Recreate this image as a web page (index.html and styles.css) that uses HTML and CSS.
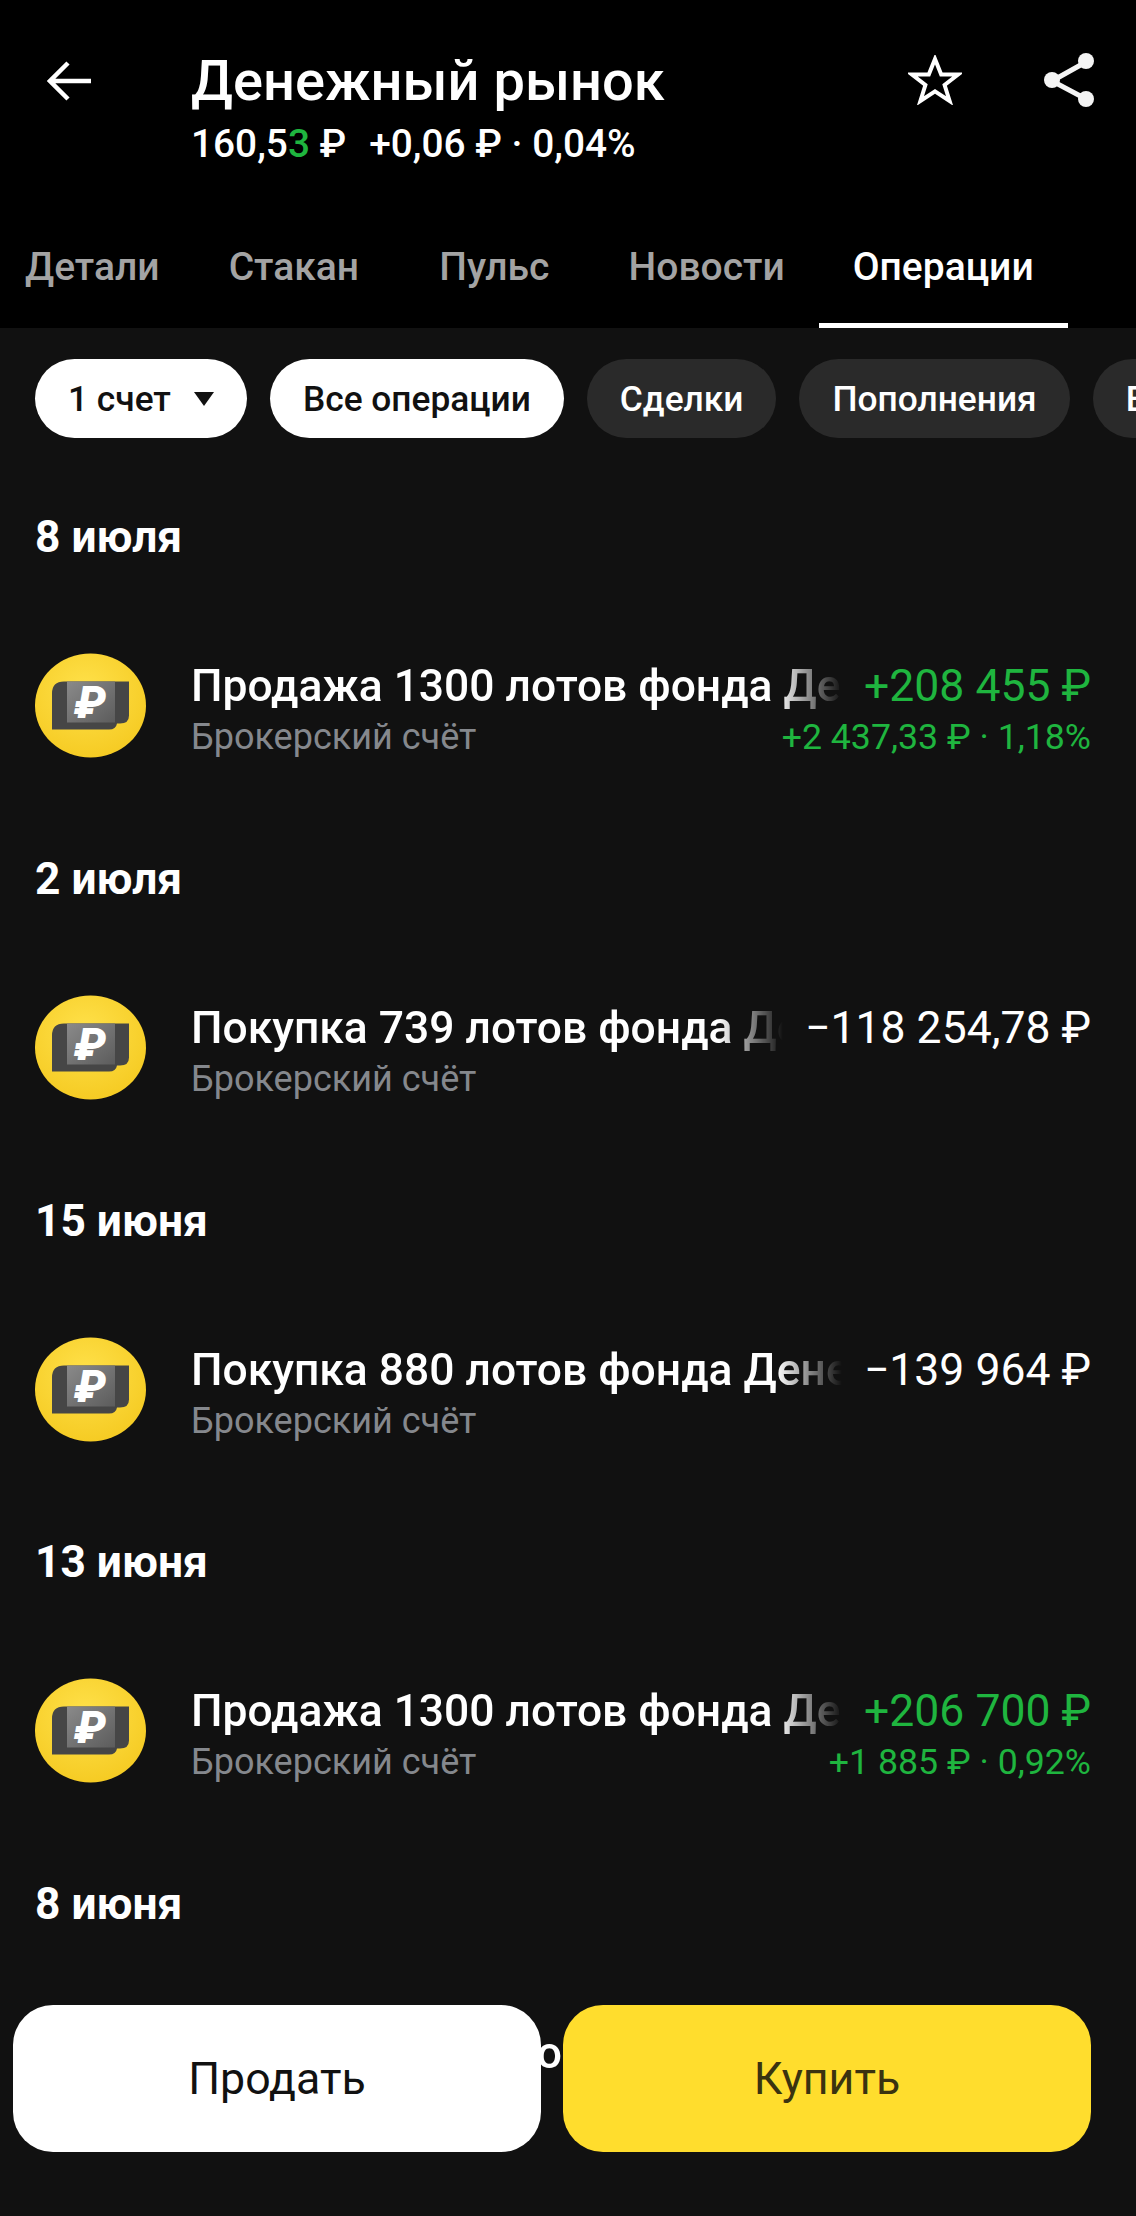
FILE: index.html
```html
<!DOCTYPE html>
<html lang="ru">
<head>
    <meta charset="UTF-8">
    <title>Денежный рынок</title>
    <link rel="stylesheet" href="styles.css">
</head>
<body>

    <svg class="defs" width="0" height="0">
        <defs>
            <linearGradient id="cardLight" x1="0" y1="0" x2="1" y2="1">
                <stop offset="0" stop-color="#8a8a8a"/>
                <stop offset="1" stop-color="#5c5c5c"/>
            </linearGradient>
            <radialGradient id="coin" cx="0.45" cy="0.35" r="0.75">
                <stop offset="0" stop-color="#ffe14a"/>
                <stop offset="1" stop-color="#f4c81e"/>
            </radialGradient>
            <symbol id="fundIcon" viewBox="0 0 111 104">
                <ellipse cx="55.5" cy="52" rx="55.5" ry="52" fill="url(#coin)"/>
                <path d="M17 40 Q17 28 29 28 H94 V62 Q94 70 85 70 H82 Q81 76 74 76 H17 Z" fill="#464646"/>
                <rect x="32" y="28" width="48" height="41" fill="url(#cardLight)"/>
                <text x="55" y="64" class="fund-sign">₽</text>
            </symbol>
        </defs>
    </svg>

    <header class="top">
        <div class="title-bar">
            <svg class="back" width="46" height="40" viewBox="0 0 46 40" fill="none" stroke="#fff" stroke-width="4.5">
                <path d="M44 20H3M21 2 3 20l18 18"/>
            </svg>
            <div class="title-text">
                <h1>Денежный рынок</h1>
                <p class="quote">160,5<span class="up">3</span> ₽<span class="change">+0,06 ₽ · 0,04%</span></p>
            </div>
            <svg class="star" width="54" height="50" viewBox="0 0 54 50" fill="none" stroke="#fff" stroke-width="4">
                <path d="M27 4l6.2 15.6H50L36.600 30l5 16L27 36.400 12.400 46l5-16L4 19.600h16.800z"/>
            </svg>
            <svg class="share" width="50" height="54" viewBox="0 0 50 54" fill="none" stroke="#f4f4f4" stroke-width="5">
                <path d="M42 9 8 28l34 18"/>
                <g fill="#f4f4f4" stroke="none">
                    <circle cx="8" cy="27" r="8"/>
                    <circle cx="42" cy="8" r="8"/>
                    <circle cx="42" cy="46" r="8"/>
                </g>
            </svg>
        </div>
        <nav class="tabs">
            <a class="tab">Детали</a>
            <a class="tab">Стакан</a>
            <a class="tab">Пульс</a>
            <a class="tab">Новости</a>
            <a class="tab active">Операции</a>
        </nav>
    </header>

    <div class="chips">
        <span class="chip light">1 счет <i class="caret"></i></span>
        <span class="chip light">Все операции</span>
        <span class="chip">Сделки</span>
        <span class="chip">Пополнения</span>
        <span class="chip">Выводы</span>
    </div>

    <main class="list">
        <section class="day">
            <h2>8 июля</h2>
            <div class="op">
                <svg class="op-icon"><use href="#fundIcon"/></svg>
                <div class="op-body">
                    <div class="op-line">
                        <span class="op-name">Продажа 1300 лотов фонда Денежный рынок</span>
                        <span class="op-sum up">+208 455 ₽</span>
                    </div>
                    <div class="op-line">
                        <span class="op-acc">Брокерский счёт</span>
                        <span class="op-gain up">+2 437,33 ₽ · 1,18%</span>
                    </div>
                </div>
            </div>
        </section>

        <section class="day">
            <h2>2 июля</h2>
            <div class="op">
                <svg class="op-icon"><use href="#fundIcon"/></svg>
                <div class="op-body">
                    <div class="op-line">
                        <span class="op-name">Покупка 739 лотов фонда Денежный рынок</span>
                        <span class="op-sum">−118 254,78 ₽</span>
                    </div>
                    <div class="op-line">
                        <span class="op-acc">Брокерский счёт</span>
                    </div>
                </div>
            </div>
        </section>

        <section class="day">
            <h2>15 июня</h2>
            <div class="op">
                <svg class="op-icon"><use href="#fundIcon"/></svg>
                <div class="op-body">
                    <div class="op-line">
                        <span class="op-name">Покупка 880 лотов фонда Денежный рынок</span>
                        <span class="op-sum">−139 964 ₽</span>
                    </div>
                    <div class="op-line">
                        <span class="op-acc">Брокерский счёт</span>
                    </div>
                </div>
            </div>
        </section>

        <section class="day">
            <h2>13 июня</h2>
            <div class="op">
                <svg class="op-icon"><use href="#fundIcon"/></svg>
                <div class="op-body">
                    <div class="op-line">
                        <span class="op-name">Продажа 1300 лотов фонда Денежный рынок</span>
                        <span class="op-sum up">+206 700 ₽</span>
                    </div>
                    <div class="op-line">
                        <span class="op-acc">Брокерский счёт</span>
                        <span class="op-gain up">+1 885 ₽ · 0,92%</span>
                    </div>
                </div>
            </div>
        </section>

        <section class="day">
            <h2>8 июня</h2>
            <div class="op">
                <svg class="op-icon"><use href="#fundIcon"/></svg>
                <div class="op-body">
                    <div class="op-line">
                        <span class="op-name">Покупка 880 лотов фонда Денежный рынок</span>
                        <span class="op-sum">−139 964 ₽</span>
                    </div>
                    <div class="op-line">
                        <span class="op-acc">Брокерский счёт</span>
                    </div>
                </div>
            </div>
        </section>
    </main>

    <div class="actions">
        <button class="btn sell">Продать</button>
        <button class="btn buy">Купить</button>
    </div>

</body>
</html>
```
FILE: styles.css
```css
* {
    box-sizing: border-box;
}
html, body {
    margin: 0;
    height: 2216px;
    overflow: hidden;
}
body {
    position: relative;
    font-family: Roboto, "Liberation Sans", sans-serif;
    background-color: #111111;
    color: #fff;
}
.defs {
    display: block;
    height: 0;
}
.top {
    height: 328px;
    background-color: #000;
}
.title-bar {
    display: flex;
    align-items: flex-start;
    height: 233px;
    padding: 53px 42px 0 47px;
}
.back {
    margin-top: 8px;
    flex: none;
}
.title-text {
    flex: 1;
    margin-left: 98px;
    margin-top: -2px;
}
h1 {
    margin: 0;
    font-size: 56px;
    line-height: 60px;
    font-weight: 500;
}
.quote {
    margin: 12px 0 0;
    font-size: 38.800px;
    line-height: 42px;
    font-weight: 500;
}
.change {
    margin-left: 23px;
}
.up {
    color: #1fb53f;
}
.star {
    flex: none;
    margin-top: 2px;
}
.share {
    flex: none;
    margin-left: 82px;
}
.tabs {
    display: flex;
    height: 95px;
    margin-left: -9px;
}
.tab {
    min-width: 200.500px;
    padding: 12px 34px 0;
    text-align: center;
    font-size: 39px;
    line-height: 44px;
    font-weight: 500;
    color: #a3a3a3;
}
.tab.active {
    color: #fff;
    border-bottom: 5px solid #fff;
}
.chips {
    display: flex;
    gap: 23px;
    padding: 31px 0 0 35px;
    overflow: hidden;
    white-space: nowrap;
}
.chip {
    display: flex;
    align-items: center;
    flex: none;
    height: 79px;
    padding: 0 33px;
    border-radius: 39.500px;
    background-color: #2a2a2a;
    font-size: 35.300px;
    font-weight: 500;
}
.chip.light {
    background-color: #fff;
    color: #111;
}
.caret {
    width: 0;
    height: 0;
    margin-left: 23px;
    border-left: 10px solid transparent;
    border-right: 10px solid transparent;
    border-top: 14px solid #111;
}
.list {
    padding: 77px 35px 0;
}
.day {
    height: 341.750px;
}
h2 {
    margin: 0;
    font-size: 44.300px;
    line-height: 44px;
    font-weight: 700;
}
.op {
    display: flex;
    align-items: flex-start;
    gap: 45px;
    height: 105px;
    margin: 94px 10px 0 0;
}
.op-icon {
    flex: none;
    width: 111px;
    height: 105px;
}
.fund-sign {
    font-size: 45px;
    font-weight: 900;
    font-style: italic;
    fill: #fff;
    text-anchor: middle;
}
.op-body {
    flex: 1;
    min-width: 0;
    margin-top: 7px;
}
.op-line {
    display: flex;
    justify-content: space-between;
    align-items: baseline;
}
.op-name {
    flex: 1;
    min-width: 0;
    overflow: hidden;
    white-space: nowrap;
    margin-right: 22px;
    font-size: 44.400px;
    line-height: 52px;
    font-weight: 500;
    -webkit-mask-image: linear-gradient(to right, #000 calc(100% - 65px), transparent);
    mask-image: linear-gradient(to right, #000 calc(100% - 65px), transparent);
}
.op-sum {
    flex: none;
    font-size: 44.500px;
    line-height: 52px;
}
.op-acc {
    font-size: 36px;
    line-height: 50px;
    color: #85888d;
}
.op-gain {
    font-size: 35.700px;
    line-height: 50px;
}
.actions {
    position: absolute;
    left: 13px;
    top: 2005px;
    display: flex;
    gap: 22px;
}
.btn {
    width: 528px;
    height: 147px;
    border: none;
    border-radius: 40px;
    font-family: inherit;
    font-size: 44.700px;
    color: #111;
}
.sell {
    background-color: #fff;
}
.buy {
    background-color: #ffdd2d;
    color: #3a3310;
}
```
